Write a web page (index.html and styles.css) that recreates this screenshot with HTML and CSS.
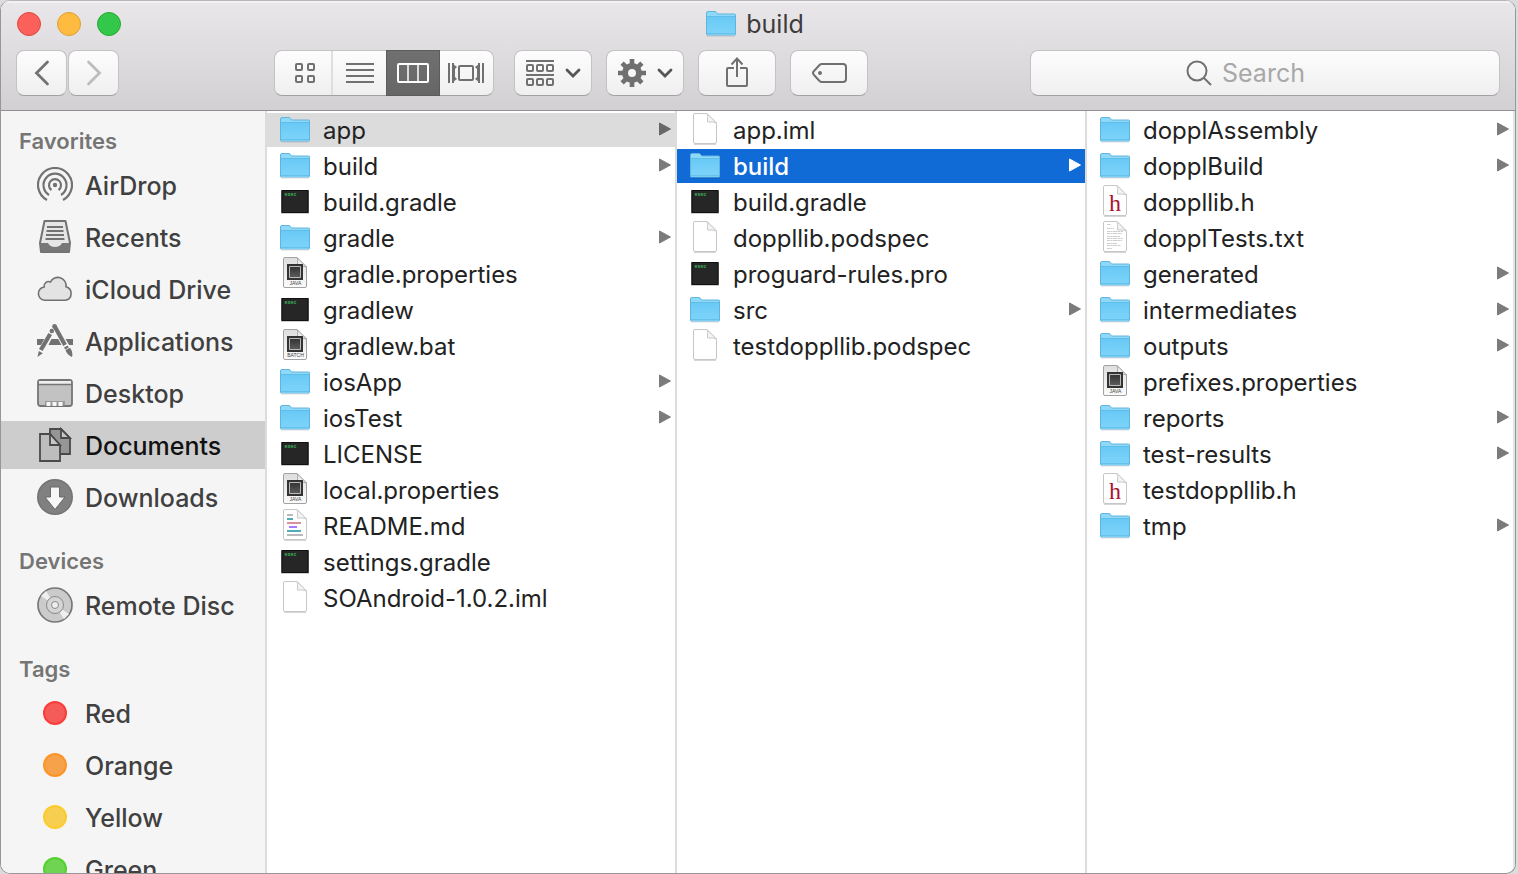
FILE: index.html
```html
<!DOCTYPE html>
<html lang="en">
<head>
<meta charset="utf-8">
<title>build</title>
<link rel="stylesheet" href="styles.css">
</head>
<body>
<svg class="paints" aria-hidden="true">
  <defs>
    <linearGradient id="folder-fill" x1="0" y1="0" x2="0" y2="1"><stop offset="0" stop-color="#68c9f5"/><stop offset="1" stop-color="#7ed4fa"/></linearGradient>
    <linearGradient id="page-fill" x1="0" y1="0" x2="0" y2="1"><stop offset="0" stop-color="#dedede"/><stop offset="1" stop-color="#fbfbfb"/></linearGradient>
    <linearGradient id="chip-fill" x1="0" y1="0" x2="0" y2="1"><stop offset="0" stop-color="#333"/><stop offset="1" stop-color="#5c5c5c"/></linearGradient>
  </defs>
</svg>
<svg class="sprite" aria-hidden="true">
  <symbol id="folder" viewBox="0 0 30 34">
    <path d="M1 29h28" stroke="#000" stroke-opacity=".13" stroke-width="1"/>
    <path d="M.5 27.500V6q0-1.500 1.500-1.500h7q1 0 1.500 1l1 1.500h17q1 0 1 1v19.500q0 .5-.5.5h-28q-.5 0-.5-.5z" fill="#8ed8f8" stroke="#62b4dc"/>
    <path d="M1 9h28v18.500H1z" fill="url(#folder-fill)"/>
    <path d="M1 9.500h28M1 26.500h28" stroke="#5bb8e4" stroke-opacity=".7"/>
  </symbol>
  <symbol id="exec" viewBox="0 0 30 34">
    <path d="M1 5h28v24H1z" fill="#bdbdbd" opacity=".75"/>
    <path d="M1.500 5h27v23h-27z" fill="#262626"/>
    <path d="M2 5.500h26v22H2z" fill="none" stroke="#111"/>
    <text x="4.500" y="11" font-family="Liberation Mono" font-weight="700" font-size="5" fill="#3fb45a">exec</text>
  </symbol>
  <symbol id="page" viewBox="0 0 30 34">
    <path d="M3.500 2q0-1.500 1.500-1.500h12l9.500 9.500v19q0 1.500-1.500 1.500H5q-1.500 0-1.500-1.500z" fill="#fff" stroke="#c6c6c6"/>
    <path d="M4 31.500h22" stroke="#000" stroke-opacity=".16"/>
    <path d="M17 .5q1 1.500.5 8.500 6.500-.5 9 1z" fill="#f4f4f4" stroke="#c9c9c9"/>
  </symbol>
  <symbol id="java" viewBox="0 0 30 34">
    <path d="M3.500 2q0-1.500 1.500-1.500h12l9.500 9.500v19q0 1.500-1.500 1.500H5q-1.500 0-1.500-1.500z" fill="url(#page-fill)" stroke="#a2a2a2"/>
    <path d="M17 .5q1 1.500.5 8.500 6.500-.5 9 1z" fill="#eee" stroke="#a8a8a8"/>
    <path d="M7 7h16v16H7z" fill="#333"/><path d="M9.500 9.500h11v11h-11z" fill="url(#chip-fill)" stroke="#bbb"/>
    <text x="15.500" y="28" text-anchor="middle" font-family="Liberation Sans" font-size="5" fill="#444">JAVA</text>
  </symbol>
  <symbol id="batch" viewBox="0 0 30 34">
    <path d="M3.500 2q0-1.500 1.500-1.500h12l9.500 9.500v19q0 1.500-1.500 1.500H5q-1.500 0-1.500-1.500z" fill="url(#page-fill)" stroke="#a2a2a2"/>
    <path d="M17 .5q1 1.500.5 8.500 6.500-.5 9 1z" fill="#eee" stroke="#a8a8a8"/>
    <path d="M7 7h16v16H7z" fill="#333"/><path d="M9.500 9.500h11v11h-11z" fill="url(#chip-fill)" stroke="#bbb"/>
    <text x="15.500" y="28" text-anchor="middle" font-family="Liberation Sans" font-size="5" fill="#444">BATCH</text>
  </symbol>
  <symbol id="markdown" viewBox="0 0 30 34">
    <use href="#page" width="30" height="34"/>
    <g stroke-width="2"><path d="M7 6h6M7 26h16" stroke="#bababa"/><path d="M7 10h6M7 22h14" stroke="#4facb8"/><path d="M7 14h14" stroke="#d9929b"/><path d="M9 18h8" stroke="#a77bff"/></g>
  </symbol>
  <symbol id="header" viewBox="0 0 30 34">
    <use href="#page" width="30" height="34"/>
    <text x="15" y="26" text-anchor="middle" font-family="Liberation Serif" font-size="24" fill="#a8142e">h</text>
  </symbol>
  <symbol id="text" viewBox="0 0 30 34">
    <use href="#page" width="30" height="34"/>
    <g stroke="#cdcdcd" stroke-width="1" stroke-dasharray="3 .5 2 .5 4 .5"><path d="M7 3.500h4M7 7.500h7M7 10.500h16M7 12.500h15M7 15.500h13M7 17.500h16M7 19.500h15M7 22.500h10M7 24.500h14M7 27.500h5"/></g>
  </symbol>

  <symbol id="airdrop" viewBox="0 0 36 36">
    <circle cx="18" cy="18" r="2.200" fill="#727272"/>
    <g fill="none" stroke="#727272" stroke-width="2.200"><path d="M14.500 23a6 6 0 1 1 7 0"/><path d="M12 28a11.500 11.500 0 1 1 12 0"/><path d="M10 33a17 17 0 1 1 16 0"/></g>
  </symbol>
  <symbol id="recents" viewBox="0 0 36 36">
    <path d="M7.500 2h21L33 24l-1 9H4l-1-9z" fill="#e6e6e6" stroke="#727272" stroke-width="2" stroke-linejoin="round"/>
    <path d="M3 24h8q2 4 7 4t7-4h8l-1 9H4z" fill="#777"/>
    <path d="M10 8h16M9.500 12h17M9 16h18M8.500 20h19" stroke="#727272" stroke-width="2"/>
  </symbol>
  <symbol id="cloud" viewBox="0 0 36 36">
    <path d="M7.500 29.300a6.700 6.700 0 0 1-.4-13.300A4.600 4.600 0 0 1 13.500 11A8.200 8.200 0 0 1 29 15.700A7 7 0 0 1 28.500 29.300z" fill="#e3e3e3" stroke="#727272" stroke-width="1.600"/>
  </symbol>
  <symbol id="apps" viewBox="0 0 36 36">
    <path d="M0 16h7.500l-3.500 6H0zM14 16h7.500l3 6H11.500zM28.500 16H36v6h-4z" fill="#727272"/>
    <g stroke="#f5f5f5" stroke-width="6"><path d="M15 9L3 30"/><path d="M18 4l13 23"/></g>
    <g stroke="#727272" stroke-width="4.200"><path d="M13.200 11L3.800 27"/><path d="M17.500 3L28 22M28.800 23.500l1.200 2"/></g>
    <circle cx="17.500" cy="3.400" r="2.300" fill="#727272"/><circle cx="14.800" cy="8" r="2.200" fill="#727272"/>
    <path d="M1.800 28l4 2.300L.5 34zM28.500 27l4.500-2.200q3.500 4.700 2 9.200-5-2-6.500-7z" fill="#727272"/>
  </symbol>
  <symbol id="desktop" viewBox="0 0 36 36">
    <rect x="1" y="5" width="34" height="26" rx="2.500" fill="#c2c2c2" stroke="#757575" stroke-width="1.800"/>
    <path d="M2 6h32v3H2z" fill="#eee"/><path d="M1 9.500h34" stroke="#757575" stroke-width="1.500"/>
    <path d="M8 26h20v4.500H8z" fill="#999"/><path d="M9.500 27h4v4h-4zM15.500 27h4v4h-4zM21.500 27h4v4h-4z" fill="#f6f6f6"/>
  </symbol>
  <symbol id="documents" viewBox="0 0 36 36">
    <g stroke="#4a4a4a" stroke-width="1.800"><path d="M13 2h11l9 9v16H13z" fill="#969696"/><path d="M24 2v9h9z" fill="#c7c7c7"/><path d="M3 7h10l10 11v16H3z" fill="#bdbdbd"/><path d="M13 7v11h10z" fill="#c7c7c7"/></g>
  </symbol>
  <symbol id="downloads" viewBox="0 0 36 36">
    <circle cx="18" cy="18" r="18" fill="#737373"/><circle cx="18" cy="18" r="16.500" fill="#808080"/><path d="M13.500 8h9v10H28L18 30.500 8 18h5.500z" fill="#f7f7f7" stroke="#696969"/>
  </symbol>
  <symbol id="disc" viewBox="0 0 36 36">
    <circle cx="18" cy="18" r="17" fill="#cbcbcb" stroke="#777" stroke-width="1.700"/>
    <path d="M18 18L4 9l5-5zM18 18l14 9-5 5z" fill="#f0f0f0"/><circle cx="18" cy="18" r="8.500" fill="#d5d5d5" stroke="#8a8a8a"/><circle cx="18" cy="18" r="3.500" fill="#eee" stroke="#8a8a8a"/>
  </symbol>
  <symbol id="tag-dot" viewBox="0 0 36 36"><circle cx="18" cy="18" r="11" fill="currentColor" stroke="currentColor" stroke-width="2"/><circle cx="18" cy="18" r="10" fill="#ddd" fill-opacity=".2"/></symbol>
  <symbol id="chevron" viewBox="0 0 16 10"><path d="M2 2l6 6 6-6" fill="none" stroke="#555" stroke-width="2.800" stroke-linecap="round"/></symbol>
  <symbol id="arrow" viewBox="0 0 14 14"><path d="M1.500 1v12l11-6z" fill="currentColor" stroke="currentColor" stroke-linejoin="round"/></symbol>
</svg>

<div class="window">
  <header class="chrome">
    <div class="titlebar">
      <div class="lights">
        <button class="light close" aria-label="Close"></button>
        <button class="light minimize" aria-label="Minimize"></button>
        <button class="light zoom" aria-label="Zoom"></button>
      </div>
      <h1 class="title"><svg class="file-icon"><use href="#folder"/></svg>build</h1>
    </div>
    <div class="toolbar">
      <div class="nav">
        <button class="tool nav-button" aria-label="Back"><svg width="16" height="26" viewBox="0 0 16 26"><path d="M13.500 2L2.500 13l11 11" fill="none" stroke="#737373" stroke-width="2.800" stroke-linecap="round"/></svg></button>
        <button class="tool nav-button" aria-label="Forward"><svg width="16" height="26" viewBox="0 0 16 26"><path d="M2.500 2l11 11-11 11" fill="none" stroke="#bdbdbd" stroke-width="2.800" stroke-linecap="round"/></svg></button>
      </div>
      <div class="views">
        <button class="view" aria-label="Icon view"><svg width="22" height="22" viewBox="0 0 22 22" fill="none" stroke="#707070" stroke-width="2"><rect x="2" y="2" width="6" height="6" rx="1"/><rect x="14" y="2" width="6" height="6" rx="1"/><rect x="2" y="14" width="6" height="6" rx="1"/><rect x="14" y="14" width="6" height="6" rx="1"/></svg></button>
        <button class="view" aria-label="List view"><svg width="28" height="22" viewBox="0 0 28 22"><path d="M0 2h28M0 8h28M0 14h28M0 20h28" stroke="#707070" stroke-width="2"/></svg></button>
        <button class="view active" aria-label="Column view" aria-pressed="true"><svg width="32" height="22" viewBox="0 0 32 22" fill="none" stroke="#fff" stroke-width="2"><rect x="1" y="2" width="30" height="18" rx="1"/><path d="M11 2v18M21 2v18" stroke-width="1.500"/></svg></button>
        <button class="view" aria-label="Gallery view"><svg width="36" height="22" viewBox="0 0 36 22" fill="none" stroke="#707070" stroke-width="2"><rect x="11" y="4" width="14" height="14" rx="1"/><path d="M1 1v20M35 1v20M5 1v20M31 1v20"/><path d="M5 2l4 3-2 2v8l2 2-4 3zM31 2l-4 3 2 2v8l-2 2 4 3z" fill="#707070" stroke="none"/></svg></button>
      </div>
      <div class="actions">
        <button class="tool menu" aria-label="Arrange"><svg width="28" height="28" viewBox="0 0 28 28" fill="none" stroke="#707070" stroke-width="2"><path d="M0 2h28M0 16h28"/><rect x="1" y="6" width="6" height="6" rx="1"/><rect x="11" y="6" width="6" height="6" rx="1"/><rect x="21" y="6" width="6" height="6" rx="1"/><rect x="1" y="20" width="6" height="6" rx="1"/><rect x="11" y="20" width="6" height="6" rx="1"/><rect x="21" y="20" width="6" height="6" rx="1"/></svg><svg class="chevron"><use href="#chevron"/></svg></button>
        <button class="tool menu" aria-label="Action"><svg width="28" height="28" viewBox="0 0 28 28"><circle cx="14" cy="14" r="7" fill="none" stroke="#707070" stroke-width="6"/><path d="M14 0v6M14 22v6M0 14h6M22 14h6M4.100 4.100L8 8M20 20l3.900 3.900M23.900 4.100L20 8M8 20l-3.900 3.900" stroke="#707070" stroke-width="4.600"/></svg><svg class="chevron"><use href="#chevron"/></svg></button>
        <button class="tool" aria-label="Share"><svg width="24" height="32" viewBox="0 0 24 32" fill="none" stroke="#707070" stroke-width="2"><path d="M9 11H3q-1 0-1 1v16q0 1 1 1h18q1 0 1-1V12q0-1-1-1h-6M12 20V1.500M6.500 7.500L12 1.500l5.500 6"/></svg></button>
        <button class="tool" aria-label="Edit tags"><svg width="36" height="22" viewBox="0 0 36 22"><path d="M11 2h21q3 0 3 3v12q0 3-3 3H11q-1.500 0-2.500-1L3 13q-2-2 0-4l5.500-6q1-1 2.500-1z" fill="none" stroke="#707070" stroke-width="2"/><circle cx="9" cy="11" r="2" fill="#707070"/></svg></button>
      </div>
      <label class="search"><svg width="26" height="26" viewBox="0 0 26 26" fill="none" stroke="#707070" stroke-width="2"><circle cx="11" cy="11" r="9.500"/><path d="M18 18l7 7"/></svg><input type="text" placeholder="Search" aria-label="Search"></label>
    </div>
  </header>

  <main class="browser">
    <nav class="sidebar" aria-label="Locations">
      <h2 class="group">Favorites</h2>
      <a class="place" href="#"><svg class="place-icon"><use href="#airdrop"/></svg><span class="label">AirDrop</span></a>
      <a class="place" href="#"><svg class="place-icon"><use href="#recents"/></svg><span class="label">Recents</span></a>
      <a class="place" href="#"><svg class="place-icon"><use href="#cloud"/></svg><span class="label">iCloud Drive</span></a>
      <a class="place" href="#"><svg class="place-icon"><use href="#apps"/></svg><span class="label">Applications</span></a>
      <a class="place" href="#"><svg class="place-icon"><use href="#desktop"/></svg><span class="label">Desktop</span></a>
      <a class="place current" href="#" aria-current="page"><svg class="place-icon"><use href="#documents"/></svg><span class="label">Documents</span></a>
      <a class="place" href="#"><svg class="place-icon"><use href="#downloads"/></svg><span class="label">Downloads</span></a>
      <h2 class="group">Devices</h2>
      <a class="place" href="#"><svg class="place-icon"><use href="#disc"/></svg><span class="label">Remote Disc</span></a>
      <h2 class="group">Tags</h2>
      <a class="place" href="#"><svg class="place-icon red"><use href="#tag-dot"/></svg><span class="label">Red</span></a>
      <a class="place" href="#"><svg class="place-icon orange"><use href="#tag-dot"/></svg><span class="label">Orange</span></a>
      <a class="place" href="#"><svg class="place-icon yellow"><use href="#tag-dot"/></svg><span class="label">Yellow</span></a>
      <a class="place" href="#"><svg class="place-icon green"><use href="#tag-dot"/></svg><span class="label">Green</span></a>
    </nav>

    <section class="column" aria-label="Project">
      <button class="file open"><svg class="file-icon"><use href="#folder"/></svg><span class="name">app</span><svg class="arrow"><use href="#arrow"/></svg></button>
      <button class="file"><svg class="file-icon"><use href="#folder"/></svg><span class="name">build</span><svg class="arrow"><use href="#arrow"/></svg></button>
      <button class="file"><svg class="file-icon"><use href="#exec"/></svg><span class="name">build.gradle</span></button>
      <button class="file"><svg class="file-icon"><use href="#folder"/></svg><span class="name">gradle</span><svg class="arrow"><use href="#arrow"/></svg></button>
      <button class="file"><svg class="file-icon"><use href="#java"/></svg><span class="name">gradle.properties</span></button>
      <button class="file"><svg class="file-icon"><use href="#exec"/></svg><span class="name">gradlew</span></button>
      <button class="file"><svg class="file-icon"><use href="#batch"/></svg><span class="name">gradlew.bat</span></button>
      <button class="file"><svg class="file-icon"><use href="#folder"/></svg><span class="name">iosApp</span><svg class="arrow"><use href="#arrow"/></svg></button>
      <button class="file"><svg class="file-icon"><use href="#folder"/></svg><span class="name">iosTest</span><svg class="arrow"><use href="#arrow"/></svg></button>
      <button class="file"><svg class="file-icon"><use href="#exec"/></svg><span class="name">LICENSE</span></button>
      <button class="file"><svg class="file-icon"><use href="#java"/></svg><span class="name">local.properties</span></button>
      <button class="file"><svg class="file-icon"><use href="#markdown"/></svg><span class="name">README.md</span></button>
      <button class="file"><svg class="file-icon"><use href="#exec"/></svg><span class="name">settings.gradle</span></button>
      <button class="file"><svg class="file-icon"><use href="#page"/></svg><span class="name">SOAndroid-1.0.2.iml</span></button>
    </section>

    <section class="column" aria-label="app">
      <button class="file"><svg class="file-icon"><use href="#page"/></svg><span class="name">app.iml</span></button>
      <button class="file selected"><svg class="file-icon"><use href="#folder"/></svg><span class="name">build</span><svg class="arrow"><use href="#arrow"/></svg></button>
      <button class="file"><svg class="file-icon"><use href="#exec"/></svg><span class="name">build.gradle</span></button>
      <button class="file"><svg class="file-icon"><use href="#page"/></svg><span class="name">doppllib.podspec</span></button>
      <button class="file"><svg class="file-icon"><use href="#exec"/></svg><span class="name">proguard-rules.pro</span></button>
      <button class="file"><svg class="file-icon"><use href="#folder"/></svg><span class="name">src</span><svg class="arrow"><use href="#arrow"/></svg></button>
      <button class="file"><svg class="file-icon"><use href="#page"/></svg><span class="name">testdoppllib.podspec</span></button>
    </section>

    <section class="column last" aria-label="build">
      <button class="file"><svg class="file-icon"><use href="#folder"/></svg><span class="name">dopplAssembly</span><svg class="arrow"><use href="#arrow"/></svg></button>
      <button class="file"><svg class="file-icon"><use href="#folder"/></svg><span class="name">dopplBuild</span><svg class="arrow"><use href="#arrow"/></svg></button>
      <button class="file"><svg class="file-icon"><use href="#header"/></svg><span class="name">doppllib.h</span></button>
      <button class="file"><svg class="file-icon"><use href="#text"/></svg><span class="name">dopplTests.txt</span></button>
      <button class="file"><svg class="file-icon"><use href="#folder"/></svg><span class="name">generated</span><svg class="arrow"><use href="#arrow"/></svg></button>
      <button class="file"><svg class="file-icon"><use href="#folder"/></svg><span class="name">intermediates</span><svg class="arrow"><use href="#arrow"/></svg></button>
      <button class="file"><svg class="file-icon"><use href="#folder"/></svg><span class="name">outputs</span><svg class="arrow"><use href="#arrow"/></svg></button>
      <button class="file"><svg class="file-icon"><use href="#java"/></svg><span class="name">prefixes.properties</span></button>
      <button class="file"><svg class="file-icon"><use href="#folder"/></svg><span class="name">reports</span><svg class="arrow"><use href="#arrow"/></svg></button>
      <button class="file"><svg class="file-icon"><use href="#folder"/></svg><span class="name">test-results</span><svg class="arrow"><use href="#arrow"/></svg></button>
      <button class="file"><svg class="file-icon"><use href="#header"/></svg><span class="name">testdoppllib.h</span></button>
      <button class="file"><svg class="file-icon"><use href="#folder"/></svg><span class="name">tmp</span><svg class="arrow"><use href="#arrow"/></svg></button>
    </section>
  </main>
</div>
</body>
</html>
```
FILE: styles.css
```css
* { box-sizing: border-box; }

body {
  margin: 0;
  height: 100vh;
  padding: 0 2px 0 0;
  overflow: hidden;
  background: #dcdcdc;
  color: #222;
  font-family: Inter, "Liberation Sans", sans-serif;
  font-size: 24px;
}

button, input { font: inherit; color: inherit; }
svg { flex: none; }
.paints { position: absolute; width: 0; height: 0; }
.sprite { display: none; }

.window {
  display: flex;
  flex-direction: column;
  height: 100%;
  overflow: hidden;
  border: 1px solid #979797;
  border-top-color: #b8b7b8;
  border-radius: 10px;
  background: #fff;
}

/* Title bar and toolbar */
.chrome {
  padding-bottom: 14px;
  border-bottom: 1px solid #929092;
  background: linear-gradient(#e9e7e9, #d2d0d2);
  box-shadow: inset 0 2px 0 #f3f2f3;
}
.titlebar {
  display: grid;
  grid-template-columns: 1fr auto 1fr;
  align-items: center;
  height: 49px;
  padding: 0 22px 4px 16px;
}
.lights { display: flex; gap: 16px; }
.light { width: 24px; height: 24px; padding: 0; border: 1px solid; border-radius: 50%; }
.close { background: #fc605b; border-color: #e2463f; }
.minimize { background: #fdbc40; border-color: #dfa032; }
.zoom { background: #34c84a; border-color: #24a936; }
.title {
  display: flex;
  align-items: center;
  gap: 10px;
  margin: 0;
  color: #3c3c3c;
  font-size: 25px;
  font-weight: 400;
}
.toolbar { display: flex; padding: 0 15px; }
.nav { display: flex; gap: 1px; margin-right: 155px; }
.actions { display: flex; gap: 14px; margin: 0 162px 0 20px; }
.tool, .views, .search {
  display: flex;
  align-items: center;
  justify-content: center;
  height: 46px;
  border: 1px solid #c4c2c4;
  border-bottom-color: #a3a1a3;
  border-radius: 8px;
  background: linear-gradient(#fdfdfd, #efefef);
}
.tool { width: 78px; padding: 0; }
.menu { gap: 11px; padding-left: 1px; }
.nav-button { width: 51px; }
.chevron { width: 16px; height: 10px; }
.views { align-items: stretch; width: 220px; }
.view {
  display: flex;
  align-items: center;
  justify-content: center;
  flex: 1;
  padding: 0;
  border: 0;
  background: none;
}
.view:first-child { border-right: 2px solid #dedede; flex: 0 0 58px; padding-left: 4px; }
.view.active { margin: -1px 0; background: linear-gradient(#707070, #666); box-shadow: inset 0 0 0 1px #5c5c5c; }
.search { flex: 1; gap: 10px; padding-right: 34px; }
.search input {
  width: 88px;
  padding: 0;
  border: 0;
  outline: 0;
  background: none;
  font-size: 25px;
}
.search input::placeholder { color: #a8a8a8; opacity: 1; }

/* Sidebar */
.browser {
  flex: 1;
  display: grid;
  grid-template-columns: 264px 410px 410px 1fr;
  min-height: 0;
}
.sidebar {
  display: flex;
  flex-direction: column;
  gap: 4px;
  overflow: hidden;
  padding-top: 10px;
  background: #f5f5f5;
}
.group {
  flex: none;
  margin: 16px 0 -4px;
  padding-left: 18px;
  color: #757575;
  font-size: 22px;
  font-weight: 600;
  line-height: 40px;
}
.group:first-child { margin-top: 0; }
.place {
  flex: none;
  display: flex;
  align-items: center;
  gap: 12px;
  height: 48px;
  padding: 0 0 0 36px;
  color: #404040;
  font-size: 25px;
  font-weight: 500;
  text-decoration: none;
}
.label { padding-top: 2px; }
.place.current { background: #cdcdcd; color: #111; }
.place-icon { width: 36px; height: 36px; }
.red { color: #fc3d39; }
.orange { color: #fd9426; }
.yellow { color: #fdcb2e; }
.green { color: #53d22f; }

/* File columns */
.column {
  display: flex;
  flex-direction: column;
  gap: 2px;
  min-width: 0;
  padding-top: 2px;
  border-left: 2px solid #dcdcdc;
}
.column.last { border-right: 2px solid #e4e4e4; }
.file {
  display: flex;
  align-items: center;
  height: 34px;
  padding: 0 3px 0 13px;
  border: 0;
  background: none;
  text-align: left;
}
.file-icon { width: 30px; height: 34px; }
.name { flex: 1; padding: 1px 0 0 13px; white-space: nowrap; }
.arrow { width: 14px; height: 14px; margin-bottom: 2px; color: #7b7b7b; }
.open { background: #dcdcdc; }
.open .arrow { color: #686868; }
.selected { background: #116bd6; color: #fff; font-weight: 500; }
.selected .arrow { color: #fff; }
```
